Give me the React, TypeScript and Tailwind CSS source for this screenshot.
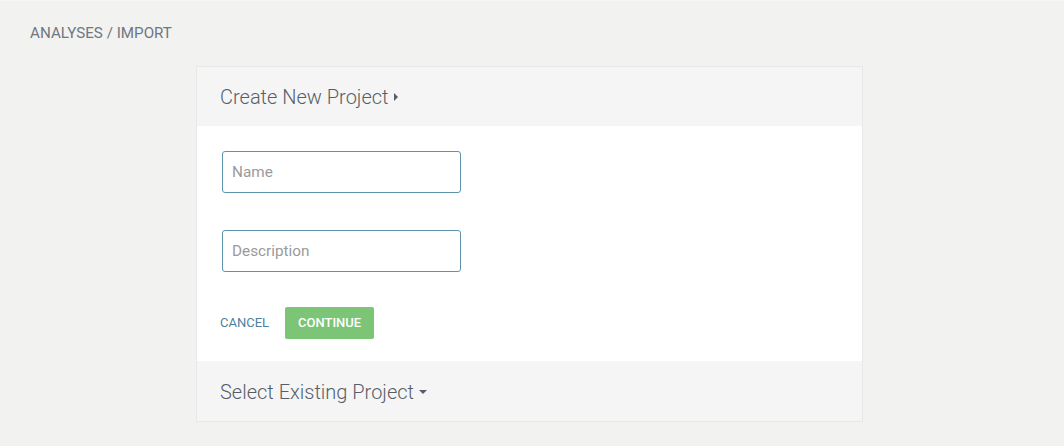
export default function App() {
  return (
    <div
      className="min-h-[446px] bg-[#f2f2f1] border-t border-[#f6f6f5] pt-[23px] px-[30px]"
      style={{ fontFamily: "Roboto, 'Liberation Sans', sans-serif" }}
    >
      <div className="text-[15.2px] leading-[18px] text-[#6f7780]">ANALYSES / IMPORT</div>
      <div className="mt-[24px] ml-[166px] w-[667px] border border-[#e8e8e7]">
        <div className="h-[59px] bg-[#f5f5f5] pl-[23px] flex items-center text-[20px] font-light text-[#555e68]">
          <span>Create New Project</span>
          <span className="ml-[5px] w-0 h-0 border-y-[4px] border-y-transparent border-l-[4px] border-l-[#555e68]" />
        </div>
        <div className="bg-white pl-[25px] pt-[25px] pb-[22px]">
          <input
            placeholder="Name"
            className="block w-[239px] h-[42px] border border-[#5f93ad] rounded-[3px] px-[9px] text-[15.3px] text-[#555] placeholder:text-[#9a9a9a] outline-none"
          />
          <input
            placeholder="Description"
            className="block mt-[37px] w-[239px] h-[42px] border border-[#5f93ad] rounded-[3px] px-[9px] text-[15.3px] text-[#555] placeholder:text-[#9a9a9a] outline-none"
          />
          <div className="mt-[35px] flex items-center">
            <button className="ml-[-2px] text-[13px] text-[#4f7f9c] h-[32px]">CANCEL</button>
            <button className="ml-[16px] w-[89px] h-[32px] rounded-[2px] bg-[#7cc576] text-white text-[13px] font-medium">
              CONTINUE
            </button>
          </div>
        </div>
        <div className="h-[60px] bg-[#f5f5f5] pl-[23px] pt-[2px] flex items-center text-[20px] font-light text-[#555e68]">
          <span>Select Existing Project</span>
          <span className="ml-[5px] w-0 h-0 border-x-[4px] border-x-transparent border-t-[4px] border-t-[#555e68]" />
        </div>
      </div>
    </div>
  );
}
